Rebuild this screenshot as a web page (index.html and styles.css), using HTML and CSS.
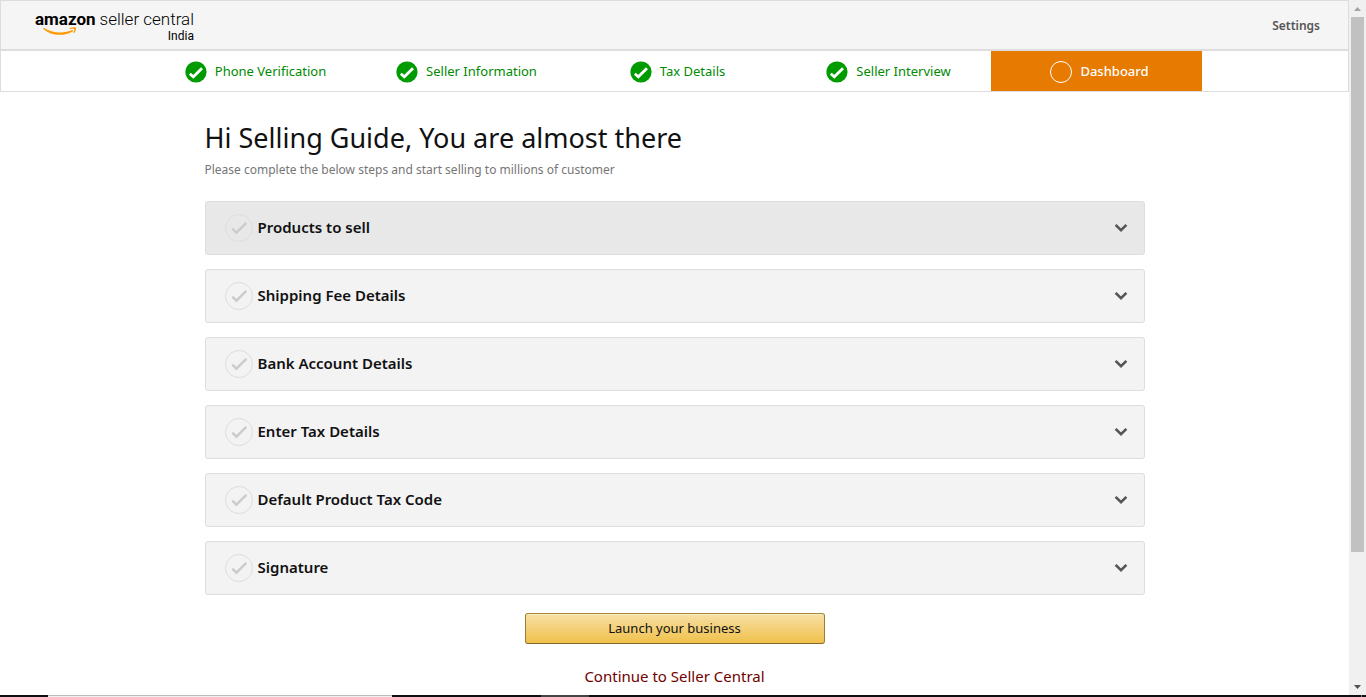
FILE: index.html
```html
<!DOCTYPE html>
<html lang="en">
<head>
<meta charset="utf-8">
<title>Seller Central India</title>
<link rel="stylesheet" href="styles.css">
</head>
<body>
<svg class="sprite" aria-hidden="true">
  <symbol id="done" viewBox="0 0 22 22"><circle cx="11" cy="11" r="10.6" fill="#009b00"/><path d="M4.800 12.800 8.300 15.800 17 7.200" fill="none" stroke="#fff" stroke-width="2.8"/></symbol>
  <symbol id="todo" viewBox="0 0 30 30"><circle cx="15" cy="15" r="13.5" fill="none" stroke="#ddd"/><path d="M8.3 15.6 12.4 19.6 22.3 9.9" fill="none" stroke="#ccc" stroke-width="2.6"/></symbol>
  <symbol id="chevron" viewBox="0 0 14 10"><path d="M1.6 1.8 7 7.2 12.4 1.8" fill="none" stroke="#555" stroke-width="2.6"/></symbol>
</svg>
<div class="window">
  <div class="page">
    <header class="header">
      <a class="logo" href="#">
        <span class="brand"><b class="amazon">amazon</b><span class="product">seller central</span></span>
        <span class="region"><svg class="smile" viewBox="0 0 34 9" aria-hidden="true"><path d="M.5 .8C9 6.400 21 6.800 29.500 3L30.300 4.200C21 9.800 8 9 .2 1.700Z" fill="#f90"/><path d="M26.500 1.300C29 .3 32 .1 32.800 .7 33.500 2 32.500 4.500 30.700 6.300L30.200 6C31 4 31.600 2.600 31.200 2 30.500 1.500 28.500 1.600 26.500 1.900Z" fill="#f90"/></svg><span class="country">India</span></span>
      </a>
      <a class="settings" href="#">Settings</a>
    </header>
    <nav class="steps" aria-label="Registration steps">
      <a class="step" href="#"><svg class="mark"><use href="#done"/></svg><span class="label">Phone Verification</span></a>
      <a class="step" href="#"><svg class="mark"><use href="#done"/></svg><span class="label">Seller Information</span></a>
      <a class="step" href="#"><svg class="mark"><use href="#done"/></svg><span class="label">Tax Details</span></a>
      <a class="step" href="#"><svg class="mark"><use href="#done"/></svg><span class="label">Seller Interview</span></a>
      <a class="step current" href="#" aria-current="step"><span class="mark ring"></span><span class="label">Dashboard</span></a>
    </nav>
    <main class="content">
      <h1 class="title">Hi Selling Guide, You are almost there</h1>
      <p class="intro">Please complete the below steps and start selling to millions of customer</p>
      <div class="tasks">
        <button class="task hovered" aria-expanded="false"><svg class="tick"><use href="#todo"/></svg><span class="name">Products to sell</span><svg class="chevron"><use href="#chevron"/></svg></button>
        <button class="task" aria-expanded="false"><svg class="tick"><use href="#todo"/></svg><span class="name">Shipping Fee Details</span><svg class="chevron"><use href="#chevron"/></svg></button>
        <button class="task" aria-expanded="false"><svg class="tick"><use href="#todo"/></svg><span class="name">Bank Account Details</span><svg class="chevron"><use href="#chevron"/></svg></button>
        <button class="task" aria-expanded="false"><svg class="tick"><use href="#todo"/></svg><span class="name">Enter Tax Details</span><svg class="chevron"><use href="#chevron"/></svg></button>
        <button class="task" aria-expanded="false"><svg class="tick"><use href="#todo"/></svg><span class="name">Default Product Tax Code</span><svg class="chevron"><use href="#chevron"/></svg></button>
        <button class="task" aria-expanded="false"><svg class="tick"><use href="#todo"/></svg><span class="name">Signature</span><svg class="chevron"><use href="#chevron"/></svg></button>
      </div>
      <div class="actions">
        <button class="launch">Launch your business</button>
        <a class="continue" href="#">Continue to Seller Central</a>
      </div>
    </main>
  </div>
  <div class="scrollbar" aria-hidden="true">
    <svg class="arrow" viewBox="0 0 17 17"><path d="M5 11h7L8.500 7Z" fill="#a3a3a3"/></svg>
    <div class="track"><div class="thumb"></div></div>
    <svg class="arrow" viewBox="0 0 17 17"><path d="M5 7h7L8.500 11Z" fill="#505050"/></svg>
  </div>
</div>
<div class="taskbar" aria-hidden="true"><span class="start"></span><span class="search"></span><span class="space"></span><span class="active"></span><span class="rest"></span><span class="edge"></span></div>
</body>
</html>
```
FILE: styles.css
```css
* { box-sizing: border-box; }
body {
  margin: 0;
  height: 100vh;
  display: flex;
  flex-direction: column;
  overflow: hidden;
  background: #fff;
  color: #111;
  font-family: "Noto Sans", sans-serif;
  font-size: 13px;
}
a { color: inherit; text-decoration: none; }
button { font: inherit; color: inherit; cursor: pointer; }
.sprite { position: absolute; width: 0; height: 0; }

.window { flex: 1; min-height: 0; display: flex; }
.page { flex: 1; min-width: 0; overflow: hidden; }

.header {
  height: 50px;
  display: flex;
  justify-content: space-between;
  align-items: center;
  padding: 0 28px 0 34px;
  background: #f5f5f5;
  border: 1px solid #ddd;
}
.logo { display: flex; flex-direction: column; padding-top: 3px; font-family: Roboto, sans-serif; color: #000; }
.brand { display: flex; align-items: baseline; gap: 4px; line-height: 20px; font-size: 17px; }
.product { font-weight: 300; }
.region { display: flex; justify-content: space-between; align-items: flex-start; line-height: 15px; font-size: 12px; }
.smile { width: 34px; height: 9px; margin: -2px 0 0 8px; }
.settings { font-size: 12px; font-weight: 600; color: #555; }

.steps {
  display: flex;
  justify-content: center;
  border: 1px solid #ddd;
  height: 42px;
}
.step {
  flex: 0 1 211px;
  display: flex;
  align-items: center;
  justify-content: center;
  gap: 8px;
  padding: 1px 0 0 6px;
  color: #008a00;
  white-space: nowrap;
}
.label { padding-bottom: 2px; }
.mark { width: 22px; height: 22px; flex: none; }
.ring { border: 1px solid #fff; border-radius: 50%; }
.current { background: #e77a00; color: #fff; font-weight: 500; }

.content { max-width: 940px; margin: 0 auto; padding-top: 26px; }
.title { margin: 0; font-size: 27px; line-height: 40px; font-weight: 400; }
.intro { margin: 2px 0 21px; font-size: 12px; line-height: 20px; color: #767676; }
.tasks { display: flex; flex-direction: column; gap: 14px; }
.task {
  display: flex;
  align-items: center;
  height: 54px;
  padding: 0 16px 0 18px;
  background: #f3f3f3;
  border: 1px solid #ddd;
  border-radius: 3px;
  text-align: left;
}
.hovered { background: #e8e8e8; }
.tick { width: 30px; height: 30px; }
.name { flex: 1; margin-left: 4px; padding-bottom: 2px; font-size: 15px; font-weight: 600; }
.chevron { width: 14px; height: 10px; }

.actions { display: flex; flex-direction: column; align-items: center; gap: 21px; padding-top: 18px; }
.launch {
  width: 300px;
  height: 31px;
  padding: 0 0 2px;
  border: 1px solid;
  border-color: #a88734 #9c7e31 #846a29;
  border-radius: 3px;
  background: linear-gradient(#f7dfa5, #f0c14b);
  box-shadow: inset 0 1px 0 rgba(255, 255, 255, .4);
}
.continue { font-size: 15px; line-height: 22px; color: #700000; }

.scrollbar { width: 17px; display: flex; flex-direction: column; background: #f0f0f0; }
.arrow { width: 17px; height: 17px; }
.track { flex: 1; padding: 0 2px; }
.thumb { height: 81%; background: #c1c1c1; }

.taskbar { display: flex; height: 2px; background: #101014; }
.start { width: 48px; }
.search { width: 344px; background: #f0f0f0; border-top: 1px solid #bbb; }
.space { width: 149px; }
.active { width: 48px; background: #444; }
.rest { flex: 1; }
.edge { width: 5px; border-left: 1px solid #777; }
```
